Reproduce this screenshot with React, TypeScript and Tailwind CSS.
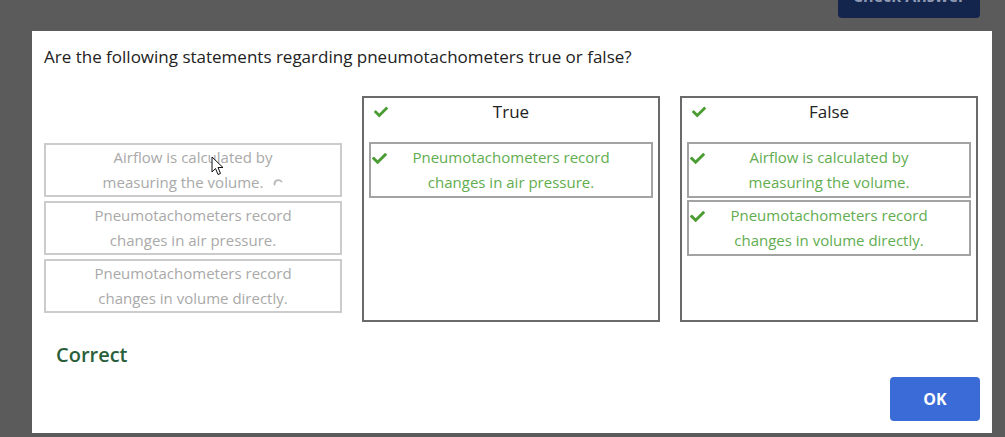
import type { ReactNode } from "react";
import { FaCheck } from "react-icons/fa";

const trueItems = [["Pneumotachometers record", "changes in air pressure."]];
const falseItems = [
  ["Airflow is calculated by", "measuring the volume."],
  ["Pneumotachometers record", "changes in volume directly."],
];

const Spinner = () => (
  <svg width="10" height="10" viewBox="0 0 10 10" className="inline-block ml-[10px] -mt-[2px] align-middle">
    <path d="M1.5 6.5 A4 4 0 0 1 8.5 3.5" fill="none" stroke="#b9b9b9" strokeWidth="1.8" strokeLinecap="round" />
  </svg>
);

const Cursor = () => (
  <svg width="13" height="21" viewBox="0 0 13 21" className="absolute left-[165px] top-[11px]">
    <path d="M1 1 L1 16 L4.5 12.5 L7 18.5 L9.5 17.5 L7 11.5 L12 11.5 Z" fill="#fff" stroke="#111" strokeWidth="1" strokeLinejoin="round" />
  </svg>
);

const Answer = ({ lines }: { lines: string[] }) => (
  <div className="h-[56px] border-2 border-[#a3a3a3] flex">
    <div className="w-[18px] pl-[1px] pt-[7px]">
      <FaCheck className="text-[#4b9c32] text-[15px]" />
    </div>
    <div className="flex-1 flex flex-col items-center justify-center text-center text-[15px] leading-[25px] text-[#62ad4f] whitespace-nowrap">
      <span>{lines[0]}</span>
      <span>{lines[1]}</span>
    </div>
    <div className="w-[18px]" />
  </div>
);

const Bucket = ({ label, items }: { label: string; items: string[][] }) => (
  <div className="h-[226px] border-2 border-[#6a6a6a]">
    <div className="h-[28px] flex items-center relative">
      <FaCheck className="absolute left-[10px] top-[7px] text-[#4b9c32] text-[14px]" />
      <span className="flex-1 text-center text-[17px] text-[#222]">{label}</span>
    </div>
    <div className="mt-[16px] mx-[5px] flex flex-col gap-[2px]">
      {items.map((l) => (
        <Answer key={l[0] + l[1]} lines={l} />
      ))}
    </div>
  </div>
);

const Source = ({ first, second, children }: { first: string; second: ReactNode; children?: ReactNode }) => (
  <div className="relative h-[54px] border-2 border-[#cccccc] flex flex-col items-center justify-center text-center text-[15px] leading-[25px] text-[#a9a9a9] whitespace-nowrap">
    <span>{first}</span>
    <span>{second}</span>
    {children}
  </div>
);

const App = () => {
  return (
    <div className="w-[1005px] h-[437px] bg-[#5b5b5b] overflow-hidden font-['Open_Sans',sans-serif]">
      <div className="h-[31px] flex justify-end pr-[25px]">
        <div className="-mt-[26px] h-[44px] w-[142px] bg-[#13244d] rounded-[4px] flex items-center justify-center text-[16px] font-bold text-[#8e9ab3]">
          Check Answer
        </div>
      </div>
      <div className="ml-[32px] w-[960px] h-[402px] bg-white px-[12px] pt-[14px]">
        <div className="text-[17px] leading-[24px] text-[#222]">
          Are the following statements regarding pneumotachometers true or false?
        </div>
        <div className="mt-[27px] grid grid-cols-[298px_298px_298px] gap-x-[20px]">
          <div className="pt-[47px] flex flex-col gap-[4px]">
            <Source
              first="Airflow is calculated by"
              second={
                <>
                  measuring the volume.
                  <Spinner />
                </>
              }
            >
              <Cursor />
            </Source>
            <Source first="Pneumotachometers record" second="changes in air pressure." />
            <Source first="Pneumotachometers record" second="changes in volume directly." />
          </div>
          <Bucket label="True" items={trueItems} />
          <Bucket label="False" items={falseItems} />
        </div>
        <div className="mt-[21px] pl-[12px] text-[20px] leading-[24px] font-semibold text-[#2b5f3b]">
          Correct
        </div>
        <div className="mt-[10px] flex justify-end">
          <button className="h-[44px] w-[90px] bg-[#3a6bd6] rounded-[4px] text-white text-[16px] font-bold">
            OK
          </button>
        </div>
      </div>
    </div>
  );
};

export default App;
